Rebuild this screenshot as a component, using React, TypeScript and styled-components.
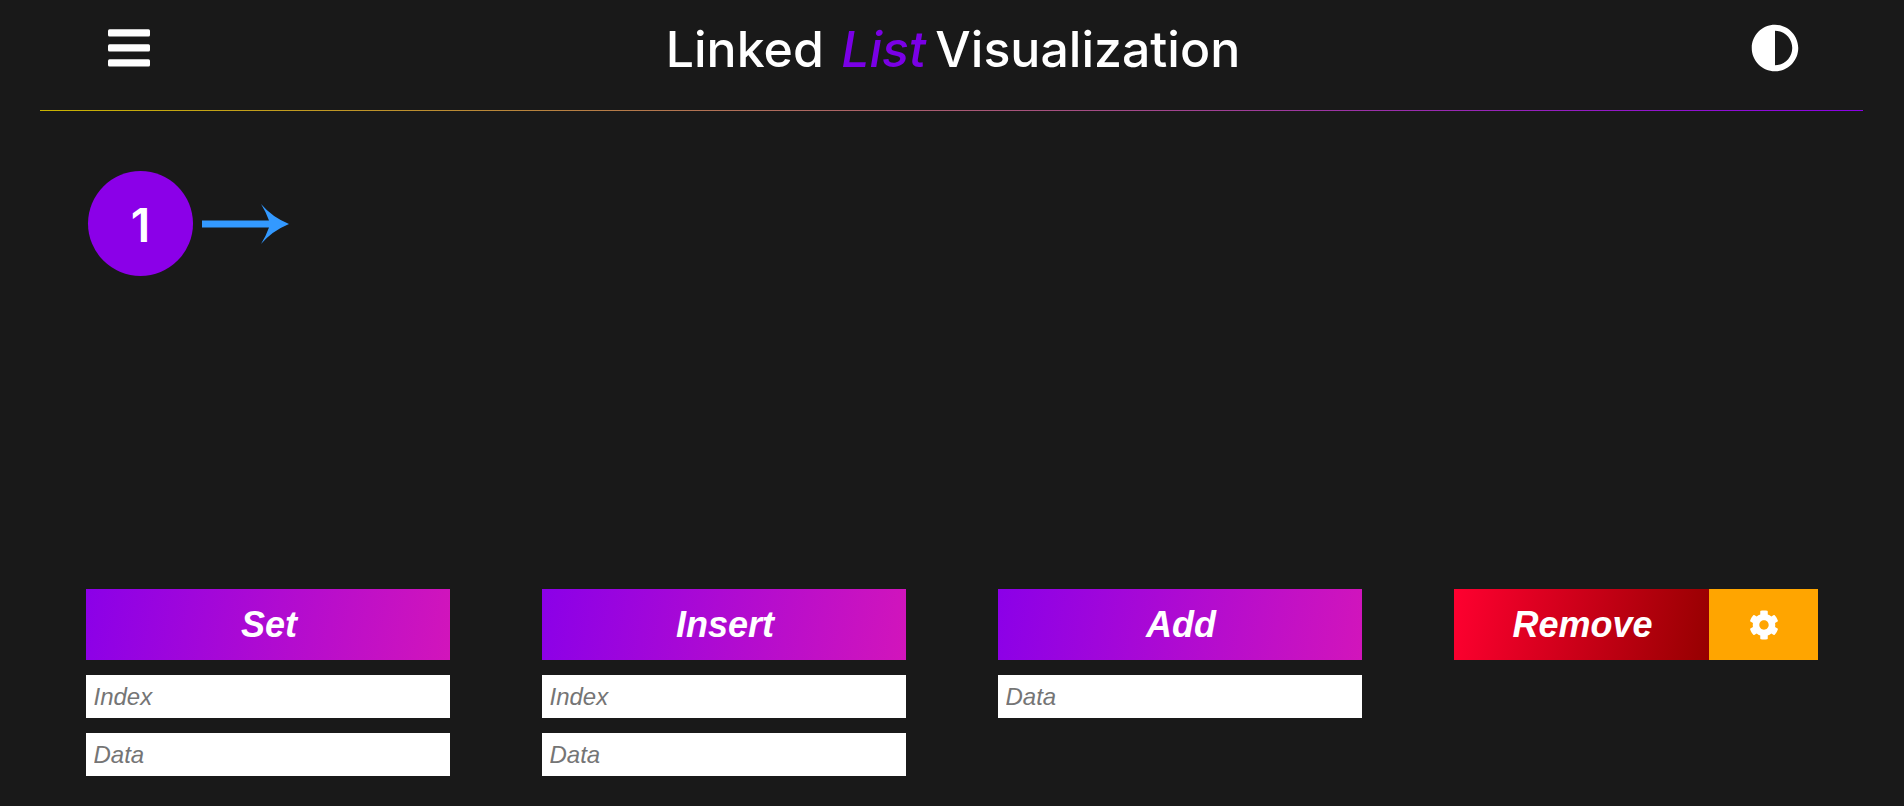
import React from "react";
import styled, { createGlobalStyle } from "styled-components";
import { FaAdjust, FaCog } from "react-icons/fa";

const Global = createGlobalStyle`
  html, body { margin: 0; padding: 0; background: #191919; }
  #root { height: 806px; overflow: hidden; }
`;

const Page = styled.div`
  height: 806px;
  display: flex;
  flex-direction: column;
  background: #191919;
  color: #fff;
`;

const Header = styled.header`
  height: 95px;
  margin: 0 41px 0 40px;
  padding: 0 64px 15px 68px;
  display: flex;
  align-items: center;
  justify-content: space-between;
  box-sizing: content-box;
  border-bottom: 1px solid;
  border-image: linear-gradient(to right, #c9b400, #8a00e6) 1;
`;

const IconButton = styled.button`
  background: none;
  border: 0;
  padding: 0;
  color: #fff;
  display: flex;
`;

const Title = styled.h1`
  margin: 3px 0 0 5px;
  font-family: Inter, "Liberation Sans", sans-serif;
  font-size: 50px;
  font-weight: 500;
  line-height: 1;
  color: #fff;
  white-space: pre;
`;

const Accent = styled.em`
  color: #7a00e6;
  font-style: italic;
  margin: 0 -4px 0 4px;
`;

const Canvas = styled.main`
  flex: 1;
  padding: 60px 88px 0;
  display: flex;
  align-items: flex-start;
`;

const Node = styled.div`
  display: flex;
  align-items: center;
  gap: 9px;
`;

const NodeCircle = styled.div`
  box-sizing: border-box;
  width: 105px;
  height: 105px;
  padding-top: 3px;
  border-radius: 50%;
  background: #8b00e8;
  display: flex;
  align-items: center;
  justify-content: center;
  font-family: Inter, "Liberation Sans", sans-serif;
  font-size: 46px;
  font-weight: 600;
  color: #fff;
`;

const Controls = styled.section`
  display: grid;
  grid-template-columns: repeat(4, 364px);
  justify-content: space-between;
  padding: 0 86px;
  height: 217px;
`;

const Column = styled.div`
  display: flex;
  flex-direction: column;
  gap: 15px;
`;

const ButtonRow = styled.div`
  display: flex;
  height: 71px;
`;

const ActionButton = styled.button<{ $danger?: boolean }>`
  flex: 1;
  border: 0;
  padding: 0 0 0 2px;
  color: #fff;
  font-family: "Liberation Sans", Arial, sans-serif;
  font-size: 36px;
  font-style: italic;
  font-weight: 700;
  background: ${(p) =>
    p.$danger
      ? "linear-gradient(100deg, #ff0030, #960000)"
      : "linear-gradient(100deg, #8b00e8, #d215bb)"};
`;

const GearButton = styled.button`
  width: 109px;
  border: 0;
  padding: 0;
  background: #ffa500;
  color: #fff;
  display: flex;
  align-items: center;
  justify-content: center;
`;

const Field = styled.input`
  box-sizing: border-box;
  width: 100%;
  height: 43px;
  border: 0;
  padding: 0 7.5px;
  background: #fff;
  font-family: "Liberation Sans", Arial, sans-serif;
  font-size: 24px;
  font-style: italic;
  &::placeholder { color: #757575; opacity: 1; }
`;

const Arrow = () => (
  <svg width="87" height="40" viewBox="0 0 87 40" fill="#3399ff">
    <path d="M0 16.5H67Q64 8 59 0Q70 13 87 20Q70 27 59 40Q64 32 67 23.5H0Z" />
  </svg>
);

const MenuIcon = () => (
  <svg width="42" height="38" viewBox="0 0 42 38" fill="currentColor">
    <rect x="0" y="0.3" width="42" height="7.2" rx="1.5" />
    <rect x="0" y="15.3" width="42" height="7.2" rx="1.5" />
    <rect x="0" y="30.3" width="42" height="7.2" rx="1.5" />
  </svg>
);

export default function App() {
  return (
    <Page>
      <Global />
      <Header>
        <IconButton aria-label="menu"><MenuIcon /></IconButton>
        <Title>Linked <Accent>List</Accent> Visualization</Title>
        <IconButton aria-label="theme"><FaAdjust size={48} /></IconButton>
      </Header>
      <Canvas>
        <Node>
          <NodeCircle>1</NodeCircle>
          <Arrow />
        </Node>
      </Canvas>
      <Controls>
        <Column>
          <ButtonRow><ActionButton>Set</ActionButton></ButtonRow>
          <Field placeholder="Index" />
          <Field placeholder="Data" />
        </Column>
        <Column>
          <ButtonRow><ActionButton>Insert</ActionButton></ButtonRow>
          <Field placeholder="Index" />
          <Field placeholder="Data" />
        </Column>
        <Column>
          <ButtonRow><ActionButton>Add</ActionButton></ButtonRow>
          <Field placeholder="Data" />
        </Column>
        <Column>
          <ButtonRow>
            <ActionButton $danger>Remove</ActionButton>
            <GearButton aria-label="settings"><FaCog size={30} /></GearButton>
          </ButtonRow>
        </Column>
      </Controls>
    </Page>
  );
}
